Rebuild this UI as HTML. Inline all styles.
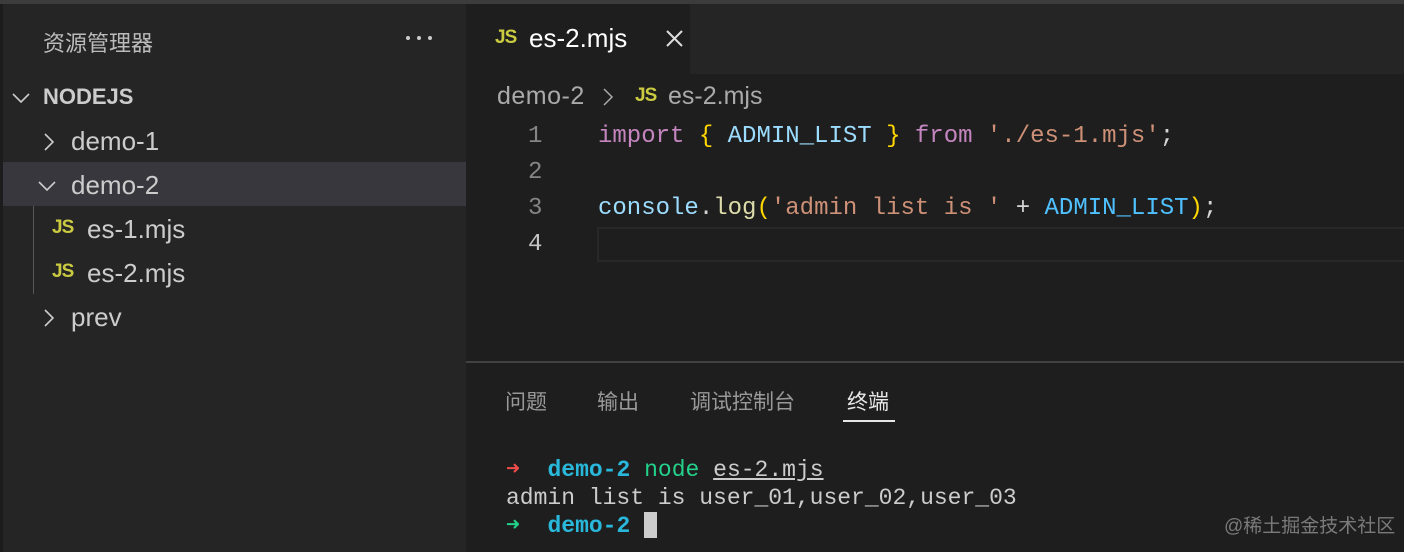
<!DOCTYPE html><html><head><meta charset="utf-8"><style>
*{margin:0;padding:0;box-sizing:border-box}
body{width:1404px;height:552px;background:#1e1e1e;position:relative;overflow:hidden;font-family:"Liberation Sans","Noto Sans CJK SC",sans-serif;color:#ccc}
.a{position:absolute;white-space:pre}
.m{font-family:"Liberation Mono","DejaVu Sans Mono",monospace}
.js{color:#cbcb41;font-weight:bold;font-size:19px;letter-spacing:-1px}
</style></head><body>
<div class="a" style="left:0;top:0;width:1404px;height:4px;background:#3c3c3c"></div>
<div class="a" style="left:0;top:4px;width:466px;height:548px;background:#252526"></div>
<div class="a" style="left:0;top:4px;width:3px;height:548px;background:#1c1c1c"></div>
<div class="a" style="left:466px;top:4px;width:938px;height:70px;background:#252526"></div>
<div class="a" style="left:466px;top:4px;width:224px;height:70px;background:#1e1e1e"></div>
<div class="a" style="left:466px;top:361px;width:938px;height:2px;background:#414141"></div>
<!-- sidebar -->
<div class="a" style="left:43px;top:26px;font-size:22px;color:#bbb">资源管理器</div>
<svg class="a" style="left:404px;top:34px" width="30" height="8"><circle cx="4" cy="4" r="2" fill="#ccc"/><circle cx="15" cy="4" r="2" fill="#ccc"/><circle cx="26" cy="4" r="2" fill="#ccc"/></svg>
<svg class="a" style="left:10px;top:87px" width="22" height="22"><path d="M3 7l8 8 8-8" stroke="#ccc" stroke-width="1.6" fill="none"/></svg>
<div class="a" style="left:43px;top:84px;font-size:22px;font-weight:bold;color:#ccc">NODEJS</div>
<svg class="a" style="left:38px;top:131px" width="20" height="22"><path d="M7 3l8 8-8 8" stroke="#ccc" stroke-width="1.6" fill="none"/></svg>
<div class="a" style="left:71px;top:126px;font-size:26px;color:#ccc">demo-1</div>
<div class="a" style="left:3px;top:162px;width:463px;height:44px;background:#37373d"></div>
<svg class="a" style="left:36px;top:175px" width="22" height="22"><path d="M3 7l8 8 8-8" stroke="#ccc" stroke-width="1.6" fill="none"/></svg>
<div class="a" style="left:71px;top:170px;font-size:26px;color:#ccc">demo-2</div>
<div class="a" style="left:33px;top:206px;width:1px;height:88px;background:#585858"></div>
<div class="a js" style="left:52px;top:217px">JS</div>
<div class="a" style="left:87px;top:214px;font-size:26px;color:#ccc">es-1.mjs</div>
<div class="a js" style="left:52px;top:261px">JS</div>
<div class="a" style="left:87px;top:258px;font-size:26px;color:#ccc">es-2.mjs</div>
<svg class="a" style="left:38px;top:307px" width="20" height="22"><path d="M7 3l8 8-8 8" stroke="#ccc" stroke-width="1.6" fill="none"/></svg>
<div class="a" style="left:71px;top:302px;font-size:26px;color:#ccc">prev</div>
<!-- tab -->
<div class="a js" style="left:495px;top:27px">JS</div>
<div class="a" style="left:529px;top:23px;font-size:26px;color:#fff">es-2.mjs</div>
<svg class="a" style="left:664px;top:28px" width="22" height="22"><path d="M3 3l15 15M18 3L3 18" stroke="#ddd" stroke-width="2"/></svg>
<!-- breadcrumb -->
<div class="a" style="left:497px;top:82px;font-size:25px;color:#aaa;letter-spacing:0.5px">demo-2</div>
<svg class="a" style="left:600px;top:86px" width="16" height="22"><path d="M4 3l8 8-8 8" stroke="#aaa" stroke-width="1.5" fill="none"/></svg>
<div class="a js" style="left:635px;top:85px">JS</div>
<div class="a" style="left:668px;top:82px;font-size:25px;color:#aaa">es-2.mjs</div>
<!-- code -->
<div class="a m" style="left:528px;top:123px;font-size:24px;color:#858585">1</div>
<div class="a m" style="left:528px;top:159px;font-size:24px;color:#858585">2</div>
<div class="a m" style="left:528px;top:195px;font-size:24px;color:#858585">3</div>
<div class="a m" style="left:528px;top:231px;font-size:24px;color:#c6c6c6">4</div>
<div class="a" style="left:597px;top:227px;width:807px;height:35px;border:2px solid #282828;border-right:none"></div>
<div class="a m" style="left:598px;top:123px;font-size:24px;color:#d4d4d4"><span style="color:#c586c0">import</span> <span style="color:#ffd700">{</span> <span style="color:#9cdcfe">ADMIN_LIST</span> <span style="color:#ffd700">}</span> <span style="color:#c586c0">from</span> <span style="color:#ce9178">'./es-1.mjs'</span>;</div>
<div class="a m" style="left:598px;top:195px;font-size:24px;color:#d4d4d4"><span style="color:#9cdcfe">console</span>.<span style="color:#dcdcaa">log</span><span style="color:#ffd700">(</span><span style="color:#ce9178">'admin list is '</span> + <span style="color:#4fc1ff">ADMIN_LIST</span><span style="color:#ffd700">)</span>;</div>
<!-- panel tabs -->
<div class="a" style="left:505px;top:386px;font-size:21px;color:#999">问题</div>
<div class="a" style="left:597px;top:386px;font-size:21px;color:#999">输出</div>
<div class="a" style="left:690px;top:386px;font-size:21px;color:#999">调试控制台</div>
<div class="a" style="left:847px;top:386px;font-size:21px;color:#e7e7e7">终端</div>
<div class="a" style="left:843px;top:420px;width:52px;height:2px;background:#e7e7e7"></div>
<!-- terminal -->
<div class="a m" style="left:506px;top:456px;font-size:23px;color:#ccc;line-height:28px"><span style="color:#f14c4c">➜</span>  <b style="color:#29b8db">demo-2</b> <span style="color:#23d18b">node</span> <span style="text-decoration:underline">es-2.mjs</span>
admin list is user_01,user_02,user_03
<span style="color:#23d18b">➜</span>  <b style="color:#29b8db">demo-2</b> <span style="display:inline-block;width:13px;height:26px;background:#ccc;vertical-align:-6px"></span></div>
<div class="a" style="left:1224px;top:511px;font-size:19px;color:#7a7a7a">@稀土掘金技术社区</div>
</body></html>
